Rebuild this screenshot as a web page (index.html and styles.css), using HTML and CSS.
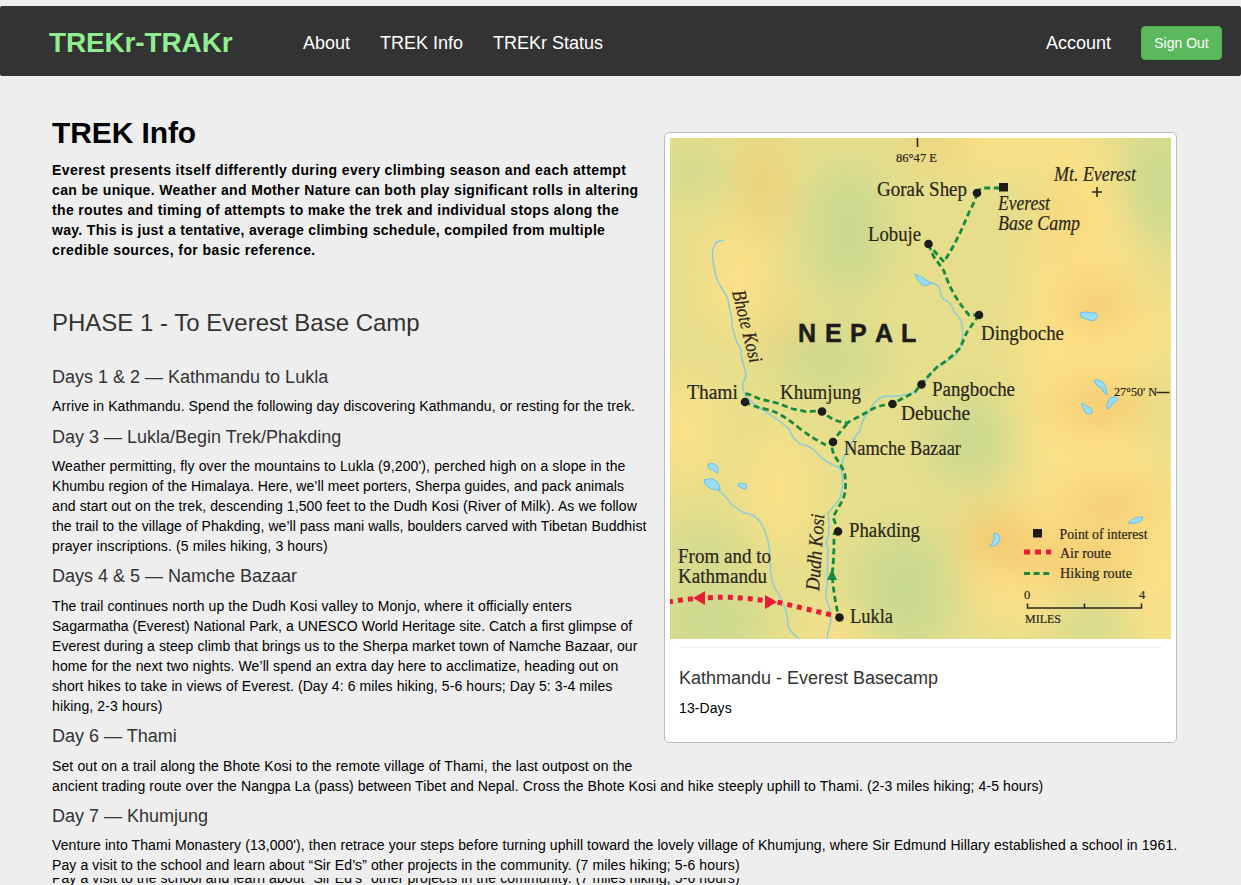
FILE: index.html
```html
<!DOCTYPE html>
<html lang="en">
<head>
<meta charset="utf-8">
<title>TREKr-TRAKr</title>
<link rel="stylesheet" href="styles.css">
</head>
<body>
<nav class="navbar">
  <a class="brand">TREKr-TRAKr</a>
  <div class="links"><a>About</a><a>TREK Info</a><a>TREKr Status</a></div>
  <div class="account"><a>Account</a><button class="btn">Sign Out</button></div>
</nav>
<main class="content">
  <figure class="card">
    <svg class="map" viewBox="670 138 501 501" width="501" height="501">
      <defs><filter id="soft" x="-20%" y="-20%" width="140%" height="140%"><feGaussianBlur stdDeviation="20"/></filter></defs>
      <rect x="670" y="138" width="501" height="501" fill="#e6de8c"/>
      <g filter="url(#soft)">
        <g fill="#fde187">
          <ellipse cx="738" cy="275" rx="32" ry="58"/><ellipse cx="1010" cy="145" rx="90" ry="26"/><ellipse cx="685" cy="430" rx="34" ry="50"/>
          <ellipse cx="1085" cy="370" rx="62" ry="230"/><ellipse cx="1020" cy="560" rx="60" ry="66"/><ellipse cx="1150" cy="560" rx="40" ry="110"/>
          <ellipse cx="845" cy="640" rx="40" ry="24"/><ellipse cx="780" cy="490" rx="32" ry="60"/><ellipse cx="1145" cy="330" rx="40" ry="32"/>
        </g>
        <g fill="#cad990">
          <ellipse cx="692" cy="172" rx="26" ry="24"/><ellipse cx="848" cy="230" rx="40" ry="66"/><ellipse cx="1157" cy="187" rx="34" ry="60"/>
          <ellipse cx="830" cy="360" rx="55" ry="28"/><ellipse cx="970" cy="440" rx="40" ry="44"/><ellipse cx="905" cy="590" rx="52" ry="60"/>
          <ellipse cx="710" cy="620" rx="55" ry="35"/><ellipse cx="710" cy="548" rx="50" ry="18"/><ellipse cx="1095" cy="622" rx="42" ry="20"/>
        </g>
        <g fill="#f3c96f">
          <ellipse cx="763" cy="185" rx="14" ry="54"/><ellipse cx="1097" cy="305" rx="36" ry="23"/><ellipse cx="1100" cy="405" rx="46" ry="24"/>
          <ellipse cx="1110" cy="503" rx="52" ry="18"/><ellipse cx="1000" cy="540" rx="36" ry="32"/><ellipse cx="1080" cy="560" rx="60" ry="20"/>
          <ellipse cx="780" cy="332" rx="12" ry="28" opacity=".7"/><ellipse cx="1065" cy="220" rx="16" ry="45" opacity=".6"/><ellipse cx="940" cy="145" rx="28" ry="12"/>
        </g>
      </g>
      <g class="river">
        <path d="M724 240q-7 1-9 4q-4 8-2 17q2 18 8 26q8 11 8 19q4 15 3 20l5 17q5 5 4 12q3 12 5 19q0 5-3 8q-1 8 3 14q7 8 17 14q15 9 26 19q3 9 11 15q9 1 16 8q8 10 22 15q4 2 4 6q2 13-2 25q-6 9-12 15q2 13 0 25q-4 5 0 9l-1 40q-3 9 1 17q5 12 1 25q-3 8-1 14"/>
        <path d="M927 282q13 2 13 8q1 10 7 11q5 3 7 11q8 7 8 13q1 11 0 18q-3 12-15 18q-14 8-21 19q-5 9-16 14q-11 3-26 2q-11 5-14 14q-8 9-10 20q-9 13-12 20q-6 9-7 18"/>
        <path d="M717 489q10 8 14 15q8 6 13 9q10 0 17 10q9 17 9 34q-1 25 9 38q9 15 9 31q2 6 8 10q6 5 5 10"/>
      </g>
      <g class="lake">
        <path d="M915 274q6 2 13 7l2 3l-5 2q-7-3-10-12z"/><path d="M1080 313q6-2 12 0q5-1 6 3l-4 5q-7-1-13-4z"/>
        <path d="M1094 380q6-1 10 3q3 6 3 12q-5-3-5-7q-6-1-8-8z"/><path d="M1107 409q0-10 5-12q5-1 6 3l-6 4q-1 4-5 5z"/>
        <path d="M1082 403l6 4q5 1 4 6q-7 3-8-4q-3-3-2-6z"/><path d="M708 464q8-2 10 4v5l-4-2q-1-3-5-2z"/>
        <path d="M704 480q9-3 12 1q4 3 4 9q-11 0-15-6z"/><path d="M738 484q6-2 9 1l-1 4q-4 0-8-3z"/>
        <path d="M994 533q6 1 6 6q-2 8-10 7q3-3 4-7z"/><path d="M1128 523q7-7 15-6q-1 8-15 6z"/>
      </g>
      <g class="hike">
        <path d="M977 193l4-5h22M977 193q-2 9-7 17l-9 21l-7 14l-10 17l-16-18M929 244q3 12 8 17l7 10q7 23 25 44l10 0M979 315l-12 17l-7 16q-11 12-23 19l-16 17l-6 8l-23 12q-14 1-23 7l-22 12q-16-2-25-12L806 411.500L793 409L777 403L760 399L748 394L743 394"/>
        <path d="M745 402q9 5 25 8q14 5 29 18q16 12 27 17l3-2M847 424q-7 8-14 17q-3 8 3 17q9 13 9 18q2 18-4 27l-8 14q2 6 5 12M838 531l-4 3q0 30-2 40q2 24 7 44"/>
      </g>
      <path d="M827 580l5-11l5 11z" fill="#168b3f"/>
      <path class="air" d="M668 602L685 599.500Q725 595 757 599.700L777 602L838 616.500" stroke-dasharray="5 5"/>
      <path d="M693 598l12-7v14zM777 602l-12-7v14z" fill="#e91c38"/>
      <g fill="#1e1c1b">
        <circle cx="977" cy="193" r="4.3"/><circle cx="928.500" cy="244" r="4.300"/><circle cx="979" cy="315" r="4.300"/><circle cx="921.500" cy="384.500" r="4.300"/>
        <circle cx="892.500" cy="404" r="4.300"/><circle cx="822" cy="411.500" r="4.300"/><circle cx="745" cy="402" r="4.300"/><circle cx="833" cy="442" r="4.300"/>
        <circle cx="838" cy="531.500" r="4.300"/><circle cx="839.500" cy="617.500" r="4.300"/><rect x="999" y="183" width="9" height="8.500"/><rect x="1033" y="529" width="9" height="8.500"/>
      </g>
      <path class="mark" d="M917.500 138v9M1156.500 392.500h13M1092 192h10M1097 187v10M1027.500 603.500v4.500h114v-4.500M1084.500 603.500v4.500"/>
      <path class="air" d="M1024 552h27" stroke-dasharray="6 5"/>
      <path class="hike" d="M1024 573.500h26" stroke-dasharray="6 4"/>
      <g class="place">
        <text x="877" y="195.500" textLength="90" lengthAdjust="spacingAndGlyphs">Gorak Shep</text>
        <text x="868" y="240.500" textLength="53" lengthAdjust="spacingAndGlyphs">Lobuje</text>
        <text x="981" y="339.500" textLength="83" lengthAdjust="spacingAndGlyphs">Dingboche</text>
        <text x="932" y="395.500" textLength="83" lengthAdjust="spacingAndGlyphs">Pangboche</text>
        <text x="901" y="420" textLength="69" lengthAdjust="spacingAndGlyphs">Debuche</text>
        <text x="687" y="399" textLength="51" lengthAdjust="spacingAndGlyphs">Thami</text>
        <text x="780" y="398.500" textLength="81" lengthAdjust="spacingAndGlyphs">Khumjung</text>
        <text x="844" y="455" textLength="117" lengthAdjust="spacingAndGlyphs">Namche Bazaar</text>
        <text x="849" y="537" textLength="71" lengthAdjust="spacingAndGlyphs">Phakding</text>
        <text x="678" y="563" textLength="93" lengthAdjust="spacingAndGlyphs">From and to</text>
        <text x="678" y="583" textLength="89" lengthAdjust="spacingAndGlyphs">Kathmandu</text>
        <text x="850" y="623" textLength="43" lengthAdjust="spacingAndGlyphs">Lukla</text>
      </g>
      <g class="place italic">
        <text x="1054" y="180.500" textLength="82" lengthAdjust="spacingAndGlyphs">Mt. Everest</text>
        <text x="998" y="209.500" textLength="52" lengthAdjust="spacingAndGlyphs">Everest</text>
        <text x="998" y="229.500" textLength="82" lengthAdjust="spacingAndGlyphs">Base Camp</text>
        <text transform="translate(732 292) rotate(76)" textLength="74" lengthAdjust="spacingAndGlyphs">Bhote Kosi</text>
        <text transform="translate(819 591) rotate(-86)" textLength="77" lengthAdjust="spacingAndGlyphs">Dudh Kosi</text>
      </g>
      <g class="legend">
        <text x="1059.500" y="538.500" textLength="88" lengthAdjust="spacingAndGlyphs">Point of interest</text>
        <text x="1060" y="558" textLength="51" lengthAdjust="spacingAndGlyphs">Air route</text>
        <text x="1060" y="577.500" textLength="72" lengthAdjust="spacingAndGlyphs">Hiking route</text>
      </g>
      <g class="small">
        <text x="896" y="162" textLength="41" lengthAdjust="spacingAndGlyphs">86°47 E</text>
        <text x="1114" y="395.500" textLength="43" lengthAdjust="spacingAndGlyphs">27°50' N</text>
        <text x="1024" y="598.500">0</text><text x="1139" y="598.500">4</text>
        <text x="1025" y="622.500" textLength="36" lengthAdjust="spacingAndGlyphs">MILES</text>
      </g>
      <text class="nepal" y="342" x="798 825 850 875 901">NEPAL</text>
    </svg>
    <figcaption class="caption">
      <h4>Kathmandu - Everest Basecamp</h4>
      <p>13-Days</p>
    </figcaption>
  </figure>
  <h1>TREK Info</h1>
  <p class="lead"><span class="open">Everest presents itself differently during every climbing season and each attempt</span><br>can be unique. Weather and Mother Nature can both play significant rolls in altering<br>the routes and timing of attempts to make the trek and individual stops along the<br><span class="close">way. This is just a tentative, average climbing schedule, compiled from multiple</span><br><span class="open">credible sources, for basic reference.</span></p>
  <h3>PHASE 1 - To Everest Base Camp</h3>
  <h4 class="early">Days 1 &amp; 2 — Kathmandu to Lukla</h4>
  <p>Arrive in Kathmandu. Spend the following day discovering Kathmandu, or resting for the trek.</p>
  <h4 class="early">Day 3 — Lukla/Begin Trek/Phakding</h4>
  <p><span class="wide">Weather permitting, fly over the mountains to Lukla (9,200'), perched high on a slope in the</span><br><span class="snug">Khumbu region of the Himalaya. Here, we’ll meet porters, Sherpa guides, and pack animals</span><br>and start out on the trek, descending 1,500 feet to the Dudh Kosi (River of Milk). As we follow<br><span class="snug">the trail to the village of Phakding, we’ll pass mani walls, boulders carved with Tibetan Buddhist</span><br><span class="wide">prayer inscriptions. (5 miles hiking, 3 hours)</span></p>
  <h4>Days 4 &amp; 5 — Namche Bazaar</h4>
  <p>The trail continues north up the Dudh Kosi valley to Monjo, where it officially enters<br><span class="tight">Sagarmatha (Everest) National Park, a UNESCO World Heritage site. Catch a first glimpse of</span><br><span class="snug">Everest during a steep climb that brings us to the Sherpa market town of Namche Bazaar, our</span><br>home for the next two nights. We’ll spend an extra day here to acclimatize, heading out on<br>short hikes to take in views of Everest. (Day 4: 6 miles hiking, 5-6 hours; Day 5: 3-4 miles<br><span class="wide">hiking, 2-3 hours)</span></p>
  <h4>Day 6 — Thami</h4>
  <p><span class="wide">Set out on a trail along the Bhote Kosi to the remote village of Thami, the last outpost on the</span><br>ancient trading route over the Nangpa La (pass) between Tibet and Nepal. Cross the Bhote Kosi and hike steeply uphill to Thami. (2-3 miles hiking; 4-5 hours)</p>
  <h4 class="late">Day 7 — Khumjung</h4>
  <p>Venture into Thami Monastery (13,000'), then retrace your steps before turning uphill toward the lovely village of Khumjung, where Sir Edmund Hillary established a school in 1961.<br><span class="loose">Pay a visit to the school and learn about “Sir Ed’s” other projects in the community. (7 miles hiking; 5-6 hours)</span></p>
  <div class="repeat"><p class="loose">Pay a visit to the school and learn about “Sir Ed’s” other projects in the community. (7 miles hiking; 5-6 hours)</p></div>
</main>
</body>
</html>
```
FILE: styles.css
```css
* { box-sizing: border-box; }
html { height: 100%; overflow: hidden; background: #eee; }
body {
  margin: 0;
  padding-top: 6px;
  height: 885px;
  overflow: hidden;
  font: 14px/20px "Liberation Sans", Arial, sans-serif;
  color: #000;
}
.navbar {
  display: flex;
  align-items: center;
  height: 70px;
  padding: 0 19px 0 49px;
  background: #333;
  border-radius: 2px;
  color: #fff;
  font-size: 18px;
  white-space: nowrap;
}
.brand { width: 254px; padding-top: 3px; font-size: 28px; line-height: 32px; font-weight: bold; letter-spacing: -0.15px; color: #90ee90; }
.links { display: flex; gap: 30px; padding-top: 3px; }
.account { display: flex; align-items: center; gap: 30px; margin-left: auto; padding-top: 3px; }
.btn {
  width: 81px;
  height: 34px;
  padding: 0;
  border: 1px solid #4cae4c;
  border-radius: 4px;
  background: #5cb85c;
  color: #fff;
  font: inherit;
  font-size: 14px;
}
.content { padding: 41px 64px 0 52px; white-space: nowrap; }
h1, h3, h4, p { margin: 0; }
p { letter-spacing: 0.095px; }
h1 { font-size: 30px; line-height: 32px; margin-bottom: 11px; letter-spacing: -0.1px; }
h3 { margin: 50px 0 31px; font-size: 24px; line-height: 26px; font-weight: normal; color: #333; }
h4 { margin: 10px 0; font-size: 18px; line-height: 20px; font-weight: normal; color: #333; }
.early { margin: 11px 0 9px; }
.late { margin-bottom: 9px; }
.lead { font-weight: bold; letter-spacing: 0.355px; }
.open { letter-spacing: 0.405px; }
.close { letter-spacing: 0.315px; }
.tight { letter-spacing: 0.035px; }
.snug { letter-spacing: 0.062px; }
.loose { letter-spacing: 0.106px; }
.wide { letter-spacing: 0.125px; }
.card {
  float: right;
  width: 513px;
  height: 611px;
  margin: 15px 0 20px 16px;
  padding: 5px;
  background: #fff;
  border: 1px solid #bbb;
  border-radius: 5px;
}
.map { display: block; }
.caption { margin: 8px 9px 0; padding-top: 20px; border-top: 1px solid #eee; }
.caption h4 { margin-top: 0; }
.repeat { margin-top: 3px; height: 7px; overflow: hidden; }
.repeat p { margin-top: -10px; }
.river path { fill: none; stroke: #87cbdc; stroke-width: 1.4; }
.lake path { fill: #9bdcf8; stroke: #69c1e5; stroke-width: 1; }
.hike { fill: none; stroke: #168b3f; stroke-width: 2.8; stroke-dasharray: 6 3.6; }
.air { fill: none; stroke: #e91c38; stroke-width: 5; }
.mark { fill: none; stroke: #2c271e; stroke-width: 1.6; }
.place, .legend, .small { font-family: "Liberation Serif", serif; fill: #2b2619; stroke: #2b2619; stroke-width: 0.2px; }
.place { font-size: 20px; }
.italic { font-style: italic; }
.legend { font-size: 15px; }
.small { font-size: 12.500px; }
.nepal { font: bold 25px "Liberation Sans", sans-serif; fill: #1e1c1b; stroke: #1e1c1b; stroke-width: 0.5px; }
```
